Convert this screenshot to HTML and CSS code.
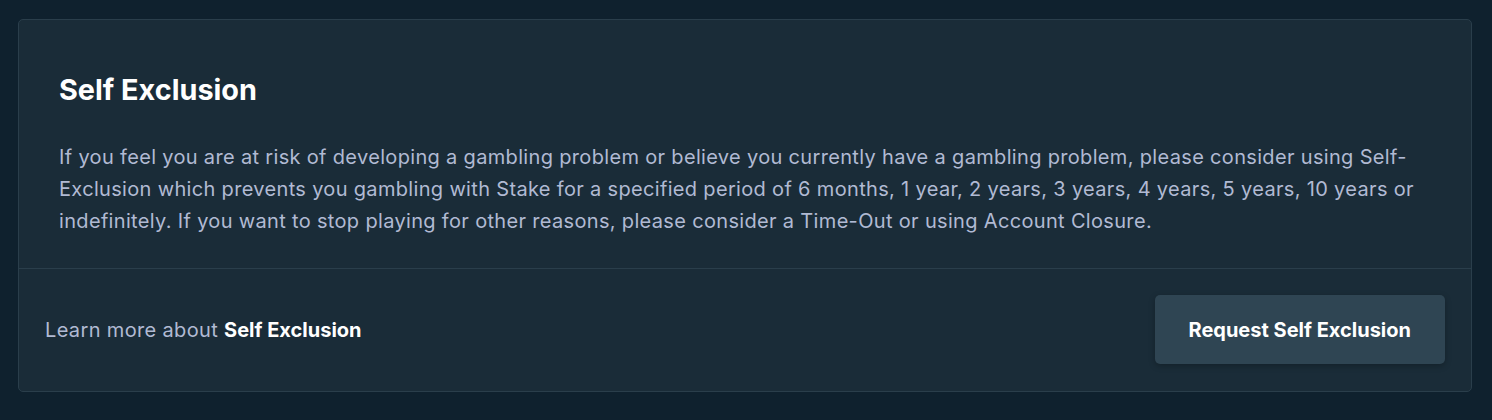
FILE: index.html
```html
<!DOCTYPE html>
<html lang="en">
<head>
<meta charset="utf-8">
<title>Self Exclusion</title>
<link rel="stylesheet" href="styles.css">
</head>
<body>
<main class="page">
  <section class="card">
    <div class="card-body">
      <h2 class="title">Self Exclusion</h2>
      <p class="desc">If you feel you are at risk of developing a gambling problem or believe you currently have a gambling problem, please consider using Self-Exclusion which prevents you gambling with Stake for a specified period of 6 months, 1 year, 2 years, 3 years, 4 years, 5 years, 10 years or indefinitely. If you want to stop playing for other reasons, please consider a Time-Out or using Account Closure.</p>
    </div>
    <div class="card-footer">
      <p class="learn"><span class="learn-text">Learn more about </span><a class="learn-link" href="#">Self Exclusion</a></p>
      <button class="btn" type="button">Request Self Exclusion</button>
    </div>
  </section>
</main>
</body>
</html>
```
FILE: styles.css
```css
* { box-sizing: border-box; }
html, body { margin: 0; padding: 0; }
body {
  background: #0f212e;
  font-family: "Inter", "Liberation Sans", sans-serif;
  color: #b1bad3;
  -webkit-font-smoothing: antialiased;
}
.page {
  padding: 19px 20px 29px 18px;
}
.card {
  background: #1a2c38;
  border: 1px solid #2a3e4b;
  border-radius: 5px;
  overflow: hidden;
}
.card-body {
  padding: 52px 40px 31px 40px;
  border-bottom: 1px solid #2a3e4b;
}
.title {
  margin: 0 0 33px 0;
  font-size: 28.8px;
  font-weight: 700;
  line-height: 36px;
  color: #ffffff;
}
.desc {
  margin: 0;
  font-size: 20px;
  line-height: 32px;
  letter-spacing: 0.33px;
  color: #b1bad3;
}
.card-footer {
  display: flex;
  align-items: center;
  justify-content: space-between;
  padding: 26px 26px 27px 26px;
}
.learn {
  margin: 0;
  font-size: 20px;
  line-height: 26px;
  color: #b1bad3;
}
.learn-text { letter-spacing: 0.35px; }
.learn-link {
  color: #ffffff;
  font-weight: 700;
  text-decoration: none;
}
.btn {
  font-family: inherit;
  font-size: 20px;
  font-weight: 700;
  color: #ffffff;
  background: #2f4553;
  border: none;
  border-radius: 5px;
  height: 69px;
  padding: 0 34px;
  box-shadow: 0 2px 6px rgba(0, 0, 0, 0.25);
  cursor: pointer;
}
```
